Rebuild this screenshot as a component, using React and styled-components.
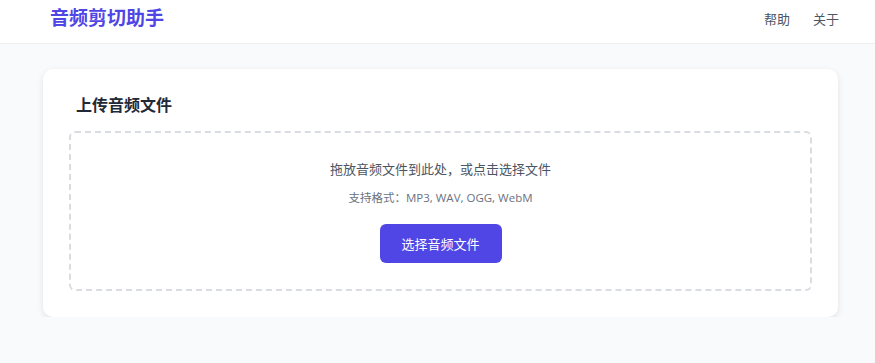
import React from "react";
import styled, { createGlobalStyle } from "styled-components";

const GlobalStyle = createGlobalStyle`
  * { box-sizing: border-box; }
  body {
    margin: 0;
    background: #f9fafb;
    font-family: "Open Sans", "Noto Sans CJK SC", sans-serif;
    color: #1f2937;
  }
`;

const Header = styled.header`
  height: 44px;
  background: #fff;
  border-bottom: 1px solid #eef0f3;
  display: flex;
  align-items: center;
  justify-content: space-between;
  padding: 0 36px 0 50px;
`;

const Logo = styled.h1`
  margin: 0;
  font-size: 19px;
  font-weight: 700;
  color: #4f46e5;
  line-height: 1;
  margin-top: -6px;
`;

const Nav = styled.nav`
  display: flex;
  gap: 23px;
  margin-top: -6px;
`;

const NavLink = styled.a`
  font-size: 13px;
  color: #4b5563;
  text-decoration: none;
  cursor: pointer;
`;

const Main = styled.main`
  padding: 25px 37px 0 43px;
`;

const Card = styled.section`
  background: #fff;
  border-radius: 10px;
  box-shadow: 0 2px 6px rgba(0, 0, 0, 0.1);
  padding: 24px 26px 26px;
`;

const Title = styled.h2`
  margin: 0 0 14px 7px;
  font-size: 16px;
  font-weight: 700;
  color: #1f2937;
  line-height: 24px;
`;

const DropZone = styled.div`
  height: 160px;
  border: 2px dashed #d9dce1;
  border-radius: 6px;
  display: flex;
  flex-direction: column;
  align-items: center;
  padding-top: 25px;
`;

const Hint = styled.p`
  margin: 0;
  font-size: 13px;
  color: #4b5563;
  line-height: 22px;
`;

const Formats = styled.p`
  margin: 9px 0 0;
  font-size: 11.5px;
  color: #6b7280;
  line-height: 18px;
`;

const Button = styled.button`
  margin-top: 17px;
  width: 122px;
  height: 39px;
  border: none;
  border-radius: 6px;
  background: #4f46e5;
  color: #fff;
  font-family: inherit;
  font-size: 13px;
  cursor: pointer;
`;

export default function App() {
  return (
    <>
      <GlobalStyle />
      <Header>
        <Logo>音频剪切助手</Logo>
        <Nav>
          <NavLink>帮助</NavLink>
          <NavLink>关于</NavLink>
        </Nav>
      </Header>
      <Main>
        <Card>
          <Title>上传音频文件</Title>
          <DropZone>
            <Hint>拖放音频文件到此处，或点击选择文件</Hint>
            <Formats>支持格式：MP3, WAV, OGG, WebM</Formats>
            <Button>选择音频文件</Button>
          </DropZone>
        </Card>
      </Main>
    </>
  );
}
